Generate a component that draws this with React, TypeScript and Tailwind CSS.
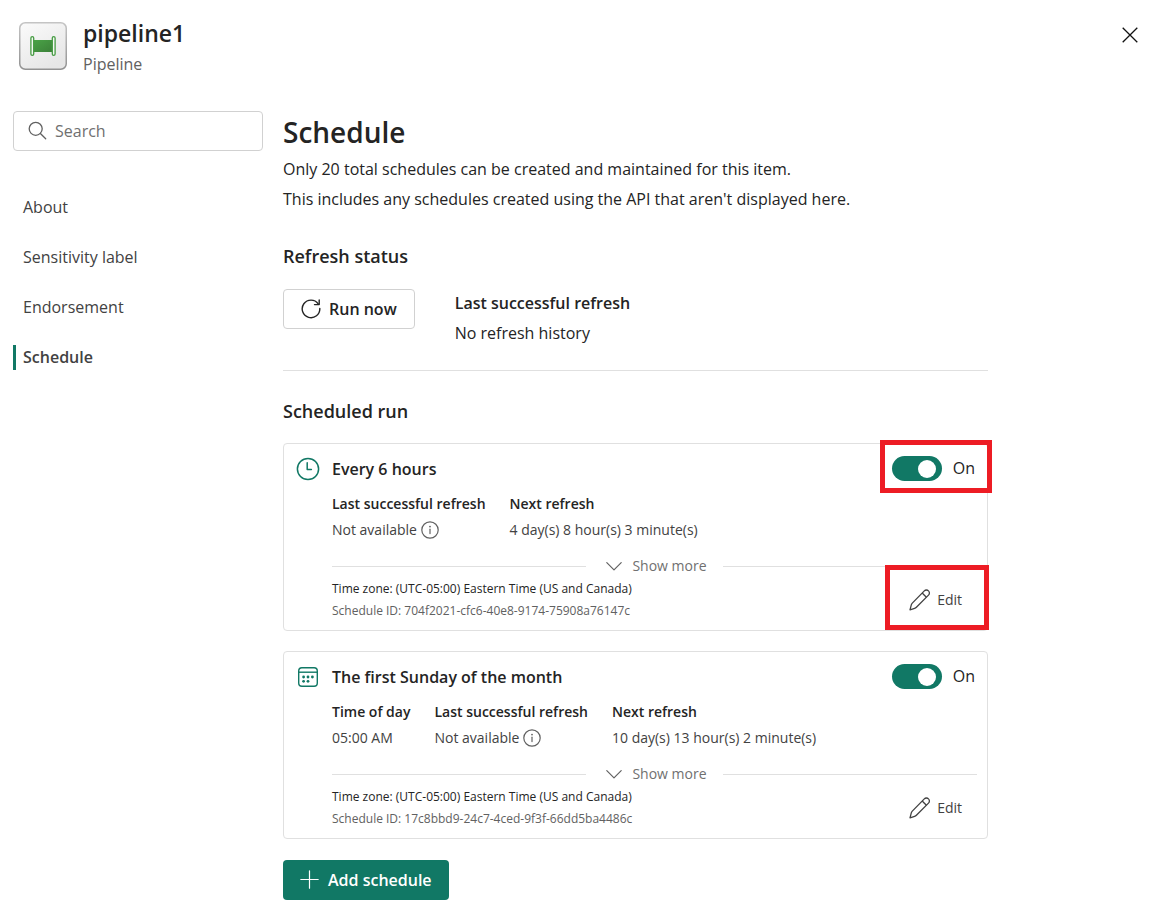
import { useState } from "react";
import type { ReactNode } from "react";

const navItems = ["About", "Sensitivity label", "Endorsement", "Schedule"];

type Detail = { label: string; value: string; info?: boolean };

type ScheduleEntry = {
  title: string;
  icon: ReactNode;
  details: Detail[];
  id: string;
  highlighted?: boolean;
};

function PipelineLogo() {
  return (
    <svg width="48" height="48" viewBox="0 0 48 48" aria-hidden="true">
      <defs>
        <linearGradient id="tile" x1="0" y1="0" x2="0.6" y2="1">
          <stop offset="0" stopColor="#fbfbfb" />
          <stop offset="1" stopColor="#e6e6e6" />
        </linearGradient>
        <linearGradient id="edge" x1="0" y1="0" x2="0" y2="1">
          <stop offset="0" stopColor="#c4c4c4" />
          <stop offset="1" stopColor="#929292" />
        </linearGradient>
        <linearGradient id="pipe" x1="0" y1="0" x2="1" y2="1">
          <stop offset="0" stopColor="#4aa347" />
          <stop offset="1" stopColor="#3b8038" />
        </linearGradient>
      </defs>
      <rect x="0.75" y="0.75" width="46.5" height="46.5" rx="5.5" fill="url(#tile)" stroke="url(#edge)" strokeWidth="1.5" />
      <rect x="14" y="18" width="20" height="12" fill="url(#pipe)" />
      <rect x="11.9" y="14.6" width="2.8" height="18.8" rx="1.4" fill="#f4f8f3" stroke="#459b42" strokeWidth="1.3" />
      <rect x="33.3" y="14.6" width="2.8" height="18.8" rx="1.4" fill="#f4f8f3" stroke="#459b42" strokeWidth="1.3" />
    </svg>
  );
}

function SearchIcon() {
  return (
    <svg width="20" height="20" viewBox="0 0 20 20" fill="none" stroke="#616161" strokeWidth="1.3" strokeLinecap="round" aria-hidden="true">
      <circle cx="7.7" cy="7.8" r="6.5" />
      <path d="M12.4 12.500 17.700 17.800" />
    </svg>
  );
}

function CloseIcon() {
  return (
    <svg width="16" height="16" viewBox="0 0 16 16" fill="none" stroke="#111" strokeWidth="1.300" aria-hidden="true">
      <path d="M0.7 0.7 15.3 15.3M15.3 0.7 0.7 15.3" />
    </svg>
  );
}

function RefreshIcon() {
  return (
    <svg width="20" height="20" viewBox="0 0 20 20" fill="none" stroke="#242424" strokeWidth="1.4" strokeLinecap="round" strokeLinejoin="round" aria-hidden="true">
      <path d="M18.8 9.4A8.800 8.800 0 1 1 17.200 4.800" />
      <path d="M18.2 0.9V5.6H13.5" />
    </svg>
  );
}

function ClockIcon() {
  return (
    <svg width="24" height="24" viewBox="0 0 24 24" fill="none" stroke="#117865" strokeWidth="1.5" strokeLinecap="round" strokeLinejoin="round" aria-hidden="true">
      <circle cx="12" cy="12" r="10.6" />
      <path d="M11.2 5.8V12.6H15.4" />
    </svg>
  );
}

function CalendarIcon() {
  return (
    <svg width="24" height="24" viewBox="0 0 24 24" fill="none" stroke="#117865" strokeWidth="1.4" aria-hidden="true">
      <rect x="2.7" y="2.7" width="18.6" height="18.6" rx="3.2" />
      <path d="M2.7 7.2H21.3" />
      <g fill="#117865" stroke="none">
        <circle cx="7.6" cy="12" r="1.4" />
        <circle cx="12" cy="12" r="1.4" />
        <circle cx="16.4" cy="12" r="1.4" />
        <circle cx="7.6" cy="16.3" r="1.4" />
        <circle cx="12" cy="16.3" r="1.4" />
      </g>
    </svg>
  );
}

function InfoIcon() {
  return (
    <svg width="18" height="18" viewBox="0 0 18 18" fill="none" stroke="#616161" strokeWidth="1.2" strokeLinecap="round" aria-hidden="true">
      <circle cx="9" cy="9" r="8.2" />
      <path d="M9 8.2V12.6" />
      <circle cx="9" cy="5.6" r="0.9" fill="#616161" stroke="none" />
    </svg>
  );
}

function ChevronIcon() {
  return (
    <svg width="16" height="16" viewBox="0 0 16 16" fill="none" stroke="#616161" strokeWidth="1.2" strokeLinecap="round" strokeLinejoin="round" aria-hidden="true">
      <path d="M0.8 4.6 8 11.8 15.2 4.6" />
    </svg>
  );
}

function PencilIcon() {
  return (
    <svg width="22" height="22" viewBox="0 0 22 22" fill="none" stroke="#424242" strokeWidth="1.3" strokeLinejoin="round" aria-hidden="true">
      <path d="M15.3 1.9a2.9 2.9 0 0 1 4.2 0 2.9 2.9 0 0 1 0 4.2L7.4 18.3a4 4 0 0 1-1.8 1L1 20.9 2.3 15.900a4 4 0 0 1 1-1.800Z" />
      <path d="M13.200 4 17.400 8.200" />
    </svg>
  );
}

function PlusIcon() {
  return (
    <svg width="20" height="20" viewBox="0 0 20 20" fill="none" stroke="#fff" strokeWidth="1.2" strokeLinecap="round" aria-hidden="true">
      <path d="M9.500 0.800V18.200M0.800 9.500H18.200" />
    </svg>
  );
}

function Toggle({ name }: { name: string }) {
  const [on, setOn] = useState(true);
  return (
    <label className="flex items-center gap-[11px] text-base leading-[25px] text-[#242424]">
      <input
        type="checkbox"
        role="switch"
        aria-label={name}
        checked={on}
        onChange={() => setOn(!on)}
        className="peer sr-only"
      />
      <span className="flex h-[25px] w-[50px] items-center justify-start rounded-full bg-[#8a8a8a] px-[6px] peer-checked:justify-end peer-checked:bg-[#117865]">
        <span className="size-[18px] rounded-full bg-white" />
      </span>
      {on ? "On" : "Off"}
    </label>
  );
}

function ScheduleCard({ entry }: { entry: ScheduleEntry }) {
  return (
    <article className="flex gap-3 rounded border border-[#e0e0e0] pt-3 pr-2.5 pb-2 pl-3">
      <div className="flex h-[26px] shrink-0 items-center">{entry.icon}</div>
      <div className="min-w-0 flex-1">
        <div className="flex items-start justify-between pr-0.5">
          <h3 className="text-base leading-[26px] font-semibold">{entry.title}</h3>
          <div className="relative">
            <Toggle name={entry.title} />
            {entry.highlighted && (
              <span className="pointer-events-none absolute -top-4 -right-[17px] -bottom-3 -left-3 border-5 border-[#ed1c24]" />
            )}
          </div>
        </div>
        <dl className="mt-[9px] flex gap-6 text-sm leading-[26px]">
          {entry.details.map((d) => (
            <div key={d.label}>
              <dt className="font-semibold">{d.label}</dt>
              <dd className="flex items-center gap-1 text-[#424242]">
                {d.value}
                {d.info && <InfoIcon />}
              </dd>
            </div>
          ))}
        </dl>
        <div className="mt-[11px] flex h-6 items-center">
          <span className="h-px flex-1 bg-[#e0e0e0]" />
          <button type="button" className="flex items-center gap-2.5 pr-4 pl-5 text-sm text-[#707070]">
            <ChevronIcon />
            Show more
          </button>
          <span className="h-px flex-1 bg-[#e0e0e0]" />
        </div>
        <div className="flex items-center justify-between pr-2">
          <div className="text-xs leading-[22px]">
            <p>Time zone: (UTC-05:00) Eastern Time (US and Canada)</p>
            <p className="text-[#616161]">Schedule ID: {entry.id}</p>
          </div>
          <div className="relative">
            <button type="button" className="flex h-11 items-center gap-1.5 pr-[7px] pl-2 text-sm text-[#424242]">
              <PencilIcon />
              Edit
            </button>
            {entry.highlighted && (
              <span className="pointer-events-none absolute -top-[13px] -right-5 -bottom-2 -left-4 border-5 border-[#ed1c24]" />
            )}
          </div>
        </div>
      </div>
    </article>
  );
}

const schedules: ScheduleEntry[] = [
  {
    title: "Every 6 hours",
    icon: <ClockIcon />,
    details: [
      { label: "Last successful refresh", value: "Not available", info: true },
      { label: "Next refresh", value: "4 day(s) 8 hour(s) 3 minute(s)" },
    ],
    id: "704f2021-cfc6-40e8-9174-75908a76147c",
    highlighted: true,
  },
  {
    title: "The first Sunday of the month",
    icon: <CalendarIcon />,
    details: [
      { label: "Time of day", value: "05:00 AM" },
      { label: "Last successful refresh", value: "Not available", info: true },
      { label: "Next refresh", value: "10 day(s) 13 hour(s) 2 minute(s)" },
    ],
    id: "17c8bbd9-24c7-4ced-9f3f-66dd5ba4486c",
  },
];

export default function App() {
  const [active, setActive] = useState("Schedule");
  return (
    <div className="bg-white pb-5 font-['Open_Sans','Noto_Sans',sans-serif] text-base text-[#242424]">
      <header className="flex items-start justify-between pt-4 pr-[25px] pl-[19px]">
        <div className="flex gap-4">
          <div className="pt-1.5">
            <PipelineLogo />
          </div>
          <div>
            <h1 className="text-[23px] leading-[34px] font-semibold">pipeline1</h1>
            <p className="leading-[28px] text-[#616161]">Pipeline</p>
          </div>
        </div>
        <button type="button" aria-label="Close" className="pt-[11px]">
          <CloseIcon />
        </button>
      </header>

      <div className="mt-[33px] flex gap-5 pl-[13px]">
        <aside className="w-[250px] shrink-0">
          <label className="flex h-10 items-center gap-[7px] rounded border border-[#d1d1d1] px-3.5">
            <SearchIcon />
            <input
              type="search"
              aria-label="Search"
              placeholder="Search"
              className="min-w-0 flex-1 outline-none placeholder:text-[#707070]"
            />
          </label>
          <nav className="mt-[31px] flex flex-col">
            {navItems.map((item) => (
              <a
                key={item}
                href="#"
                onClick={() => setActive(item)}
                className="flex h-[50px] items-center text-[#424242]"
              >
                <span
                  className={
                    item === active
                      ? "border-l-3 border-[#117865] pl-[7px] leading-[25px] font-semibold"
                      : "pl-2.5 leading-[25px]"
                  }
                >
                  {item}
                </span>
              </a>
            ))}
          </nav>
        </aside>

        <main className="max-w-[705px] min-w-0 flex-1">
          <h2 className="text-[28px] leading-[43px] font-semibold">Schedule</h2>
          <p className="leading-[30px]">
            Only 20 total schedules can be created and maintained for this item.
            <br />
            This includes any schedules created using the API that aren't displayed here.
          </p>

          <section className="mt-[29px]">
            <h3 className="text-lg leading-[26px] font-semibold">Refresh status</h3>
            <div className="mt-[19px] flex items-start gap-10">
              <button
                type="button"
                className="mt-px flex h-10 items-center gap-2 rounded border border-[#d1d1d1] px-[17px] font-semibold"
              >
                <RefreshIcon />
                Run now
              </button>
              <div className="leading-[30px]">
                <p className="font-semibold">Last successful refresh</p>
                <p>No refresh history</p>
              </div>
            </div>
          </section>

          <hr className="mt-[22px] border-[#e0e0e0]" />

          <section className="mt-[27px]">
            <h3 className="text-lg leading-[26px] font-semibold">Scheduled run</h3>
            <div className="mt-[19px] flex flex-col gap-5">
              {schedules.map((entry) => (
                <ScheduleCard key={entry.id} entry={entry} />
              ))}
            </div>
            <button
              type="button"
              className="mt-[21px] flex h-10 items-center gap-2 rounded bg-[#117865] px-[17px] font-semibold text-white"
            >
              <PlusIcon />
              Add schedule
            </button>
          </section>
        </main>
      </div>
    </div>
  );
}
